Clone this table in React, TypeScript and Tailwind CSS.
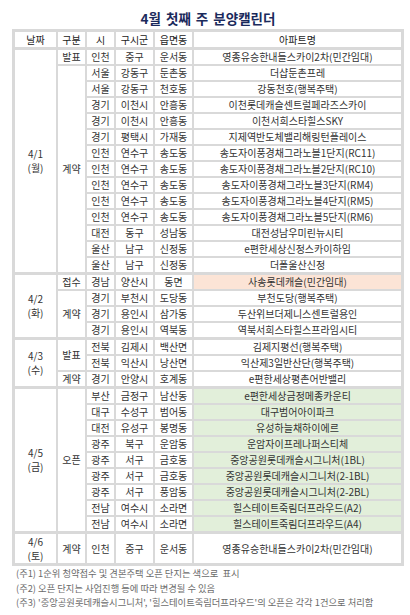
import React from 'react'

type Row = [string, string, string, string]
type Sub = { type: string; rows: Row[]; tone?: 'pink' | 'green' }
type Group = { date: string; day: string; subs: Sub[]; tall?: boolean }

const groups: Group[] = [
  {
    date: '4/1',
    day: '(월)',
    subs: [
      { type: '발표', rows: [['인천', '중구', '운서동', '영종유승한내들스카이2차(민간임대)']] },
      {
        type: '계약',
        rows: [
          ['서울', '강동구', '둔촌동', '더샵둔촌프레'],
          ['서울', '강동구', '천호동', '강동천호(행복주택)'],
          ['경기', '이천시', '안흥동', '이천롯데캐슬센트럴페라즈스카이'],
          ['경기', '이천시', '안흥동', '이천서희스타힐스SKY'],
          ['경기', '평택시', '가재동', '지제역반도체밸리해링턴플레이스'],
          ['인천', '연수구', '송도동', '송도자이풍경채그라노블1단지(RC11)'],
          ['인천', '연수구', '송도동', '송도자이풍경채그라노블2단지(RC10)'],
          ['인천', '연수구', '송도동', '송도자이풍경채그라노블3단지(RM4)'],
          ['인천', '연수구', '송도동', '송도자이풍경채그라노블4단지(RM5)'],
          ['인천', '연수구', '송도동', '송도자이풍경채그라노블5단지(RM6)'],
          ['대전', '동구', '성남동', '대전성남우미린뉴시티'],
          ['울산', '남구', '신정동', 'e편한세상신정스카이하임'],
          ['울산', '남구', '신정동', '더폴울산신정'],
        ],
      },
    ],
  },
  {
    date: '4/2',
    day: '(화)',
    subs: [
      { type: '접수', tone: 'pink', rows: [['경남', '양산시', '동면', '사송롯데캐슬(민간임대)']] },
      {
        type: '계약',
        rows: [
          ['경기', '부천시', '도당동', '부천도당(행복주택)'],
          ['경기', '용인시', '삼가동', '두산위브더제니스센트럴용인'],
          ['경기', '용인시', '역북동', '역북서희스타힐스프라임시티'],
        ],
      },
    ],
  },
  {
    date: '4/3',
    day: '(수)',
    subs: [
      {
        type: '발표',
        rows: [
          ['전북', '김제시', '백산면', '김제지평선(행복주택)'],
          ['전북', '익산시', '낭산면', '익산제3일반산단(행복주택)'],
        ],
      },
      { type: '계약', rows: [['경기', '안양시', '호계동', 'e편한세상평촌어반밸리']] },
    ],
  },
  {
    date: '4/5',
    day: '(금)',
    subs: [
      {
        type: '오픈',
        tone: 'green',
        rows: [
          ['부산', '금정구', '남산동', 'e편한세상금정메종카운티'],
          ['대구', '수성구', '범어동', '대구범어아이파크'],
          ['대전', '유성구', '봉명동', '유성하늘채하이에르'],
          ['광주', '북구', '운암동', '운암자이프레나퍼스티체'],
          ['광주', '서구', '금호동', '중앙공원롯데캐슬시그니처(1BL)'],
          ['광주', '서구', '금호동', '중앙공원롯데캐슬시그니처(2-1BL)'],
          ['광주', '서구', '풍암동', '중앙공원롯데캐슬시그니처(2-2BL)'],
          ['전남', '여수시', '소라면', '힐스테이트죽림더프라우드(A2)'],
          ['전남', '여수시', '소라면', '힐스테이트죽림더프라우드(A4)'],
        ],
      },
    ],
  },
  {
    date: '4/6',
    day: '(토)',
    tall: true,
    subs: [{ type: '계약', rows: [['인천', '중구', '운서동', '영종유승한내들스카이2차(민간임대)']] }],
  },
]

const toneBg = { pink: 'bg-[#fce4d6]', green: 'bg-[#e2efda]' }

function Cell({
  children,
  className = '',
  rowSpan,
  first,
}: {
  children?: React.ReactNode
  className?: string
  rowSpan?: number
  first?: boolean
}) {
  return (
    <td
      rowSpan={rowSpan}
      className={`p-0 text-center align-middle whitespace-nowrap ${first ? 'border-t border-[#d9d9d9]' : ''} ${className || 'bg-white'}`}
    >
      {children}
    </td>
  )
}

export default function App() {
  return (
    <div className="w-[410px] h-[615px] bg-white text-[#333] font-['Noto_Sans_CJK_KR','Noto_Sans',sans-serif]">
      <div className="ml-[12px] w-[392px]">
        <h1 className="pt-[10px] mb-[3px] text-center text-[13.5px] leading-[16px] font-bold text-[#1b2a5c] [word-spacing:2px]">
          4월 첫째 주 분양캘린더
        </h1>

        <table className="table-fixed w-[392px] border-separate border-spacing-[2px] border border-[#d9d9d9] bg-[#d9d9d9] text-[10px] leading-[14px]">
          <colgroup>
            <col className="w-[41px]" />
            <col className="w-[27px]" />
            <col className="w-[27px]" />
            <col className="w-[37px]" />
            <col className="w-[37px]" />
            <col className="w-[207px]" />
          </colgroup>
          <thead>
            <tr className="h-[15px] text-[#222]">
              {['날짜', '구분', '시', '구시군', '읍면동', '아파트명'].map((h) => (
                <th key={h} className="p-0 bg-white font-normal text-center">
                  {h}
                </th>
              ))}
            </tr>
          </thead>
          <tbody>
            {groups.map((g) => {
              const total = g.subs.reduce((n, s) => n + s.rows.length, 0)
              return g.subs.map((s, si) =>
                s.rows.map((r, ri) => {
                  const first = si === 0 && ri === 0
                  return (
                    <tr key={`${g.date}-${si}-${ri}`} className={g.tall ? 'h-[30px]' : 'h-[14px]'}>
                      {first && (
                        <Cell rowSpan={total} first>
                          {g.date}
                          <br />
                          {g.day}
                        </Cell>
                      )}
                      {ri === 0 && (
                        <Cell rowSpan={s.rows.length} first={first}>
                          {s.type}
                        </Cell>
                      )}
                      <Cell first={first}>{r[0]}</Cell>
                      <Cell first={first}>{r[1]}</Cell>
                      <Cell first={first}>{r[2]}</Cell>
                      <Cell first={first} className={s.tone ? toneBg[s.tone] : ''}>
                        {r[3]}
                      </Cell>
                    </tr>
                  )
                })
              )
            })}
          </tbody>
        </table>

        <div className="pl-[4px] text-[9.3px] leading-[14.5px] text-[#6b6b6b] whitespace-pre">
          <p>(주1) 1순위 청약접수 및 견본주택 오픈 단지는 색으로  표시</p>
          <p>(주2) 오픈 단지는 사업진행 등에 따라 변경될 수 있음</p>
          <p>(주3) '중앙공원롯데캐슬시그니처', '힐스테이트죽림더프라우드'의 오픈은 각각 1건으로 처리함</p>
        </div>
      </div>
    </div>
  )
}
